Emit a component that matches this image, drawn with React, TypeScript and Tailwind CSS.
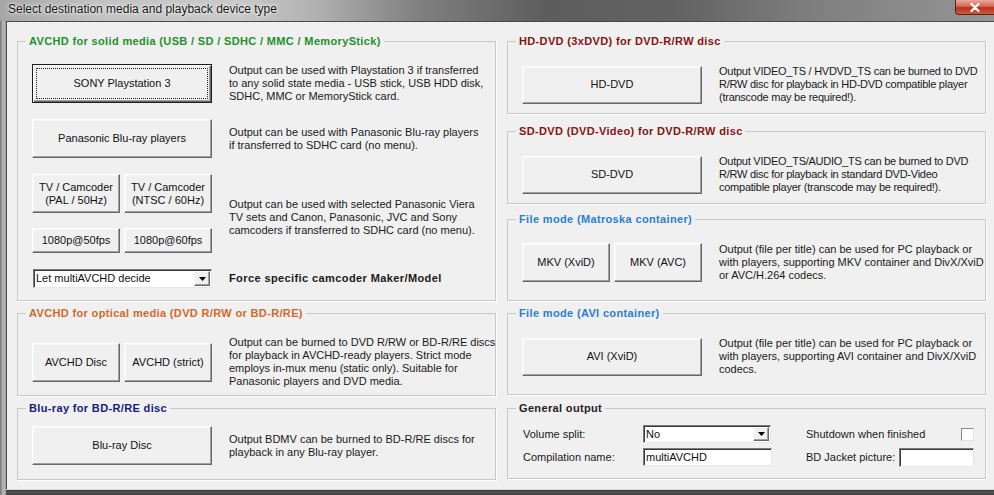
import React from "react";

type GroupProps = {
  title: string;
  color: string;
  className: string;
  children?: React.ReactNode;
};

// Etched group box with its caption sitting on the top border
function Group({ title, color, className, children }: GroupProps) {
  return (
    <fieldset
      className={`min-w-0 border border-[#c5c9cc] shadow-[1px_1px_0_#ffffff] ${className}`}
    >
      <legend className={`ml-[8px] px-[3px] text-[11px] leading-[14px] font-bold tracking-[0.35px] ${color}`}>
        {title}
      </legend>
      {children}
    </fieldset>
  );
}

type BtnProps = { className: string; children: React.ReactNode; isDefault?: boolean };

// Classic raised push button
function Btn({ className, children, isDefault }: BtnProps) {
  if (isDefault) {
    return (
      <button
        className={`flex shrink-0 p-[3px] border border-[#1c1c1c] bg-[#f0f0f0] shadow-[inset_1px_1px_0_#ffffff,inset_-1px_-1px_0_#696969,inset_-2px_-2px_0_#a0a0a0] ${className}`}
      >
        <span className="flex flex-1 items-center justify-center border border-dotted border-[#222] text-[11px] leading-[13px] text-[#111]">
          {children}
        </span>
      </button>
    );
  }
  return (
    <button
      className={`flex shrink-0 items-center justify-center text-center border border-t-white border-l-white border-r-[#696969] border-b-[#696969] bg-[#f0f0f0] shadow-[inset_-1px_-1px_0_#a0a0a0,inset_1px_1px_0_#f7f7f7] text-[11px] leading-[13px] text-[#111] ${className}`}
    >
      {children}
    </button>
  );
}

function Desc({ lines, tight }: { lines: string[]; tight?: boolean }) {
  return (
    <div
      className={`text-[11px] leading-[13px] text-[#1a1a1a] whitespace-nowrap ${tight ? "tracking-[-0.25px]" : ""}`}
    >
      {lines.map((l) => (
        <div key={l}>{l}</div>
      ))}
    </div>
  );
}

// Small down-arrow drop button of a combo box
function DropArrow() {
  return (
    <div className="flex h-full w-[16px] shrink-0 items-center justify-center border border-t-white border-l-white border-r-[#696969] border-b-[#696969] bg-[#f0f0f0] shadow-[inset_-1px_-1px_0_#a0a0a0]">
      <svg width="7" height="4" viewBox="0 0 7 4">
        <path d="M0 0H7L3.5 4Z" fill="#000" />
      </svg>
    </div>
  );
}

function Combo({ value, className }: { value: string; className: string }) {
  return (
    <div
      className={`flex shrink-0 items-stretch bg-white border border-t-[#7a7a7a] border-l-[#7a7a7a] border-r-[#e6e6e6] border-b-[#e6e6e6] shadow-[inset_1px_1px_0_#3a3a3a] ${className}`}
    >
      <span className="flex flex-1 items-center pl-[2px] text-[11px] leading-[13px] text-[#111]">{value}</span>
      <div className="py-[1px] pr-[1px]">
        <DropArrow />
      </div>
    </div>
  );
}

function Field({ value, className }: { value?: string; className: string }) {
  return (
    <div
      className={`flex shrink-0 items-center bg-white border border-t-[#7a7a7a] border-l-[#7a7a7a] border-r-[#e6e6e6] border-b-[#e6e6e6] shadow-[inset_1px_1px_0_#3a3a3a] pl-[2px] text-[11px] leading-[13px] text-[#111] ${className}`}
    >
      {value}
    </div>
  );
}

export default function App() {
  return (
    <div className="w-[994px] h-[495px] overflow-hidden flex flex-col bg-[#6f6f6f] font-['Liberation_Sans',Arial,sans-serif]">
      {/* Title bar */}
      <div className="relative flex h-[21px] shrink-0 items-start bg-[linear-gradient(90deg,#a6a6a6_0%,#c2c2c2_10%,#c9c9c9_24%,#b0b0b0_32%,#808080_42%,#5d5d5d_55%,#626262_68%,#7f7f7f_82%,#959595_100%)]">
        <span className="ml-[8px] mt-[2px] text-[12px] leading-[15px] text-[#141414] [text-shadow:0_0_5px_#ffffff,0_0_2px_#ffffff]">
          Select destination media and playback device type
        </span>
        <div className="ml-auto mr-0 flex h-[15px] w-[39px] items-center justify-center rounded-bl-[4px] border-b border-l border-[#5e2118] bg-[linear-gradient(180deg,#e9a89a_0%,#d46a55_45%,#b9321e_55%,#cf5a42_100%)]">
          <svg width="10" height="9" viewBox="0 0 10 9">
            <path d="M1.5 1L8.5 8M8.5 1L1.5 8" stroke="#ffffff" strokeWidth="2.2" strokeLinecap="round" />
          </svg>
        </div>
      </div>

      <div className="flex flex-1">
        {/* left window frame */}
        <div className="w-[6px] shrink-0 bg-[linear-gradient(90deg,#6e6e6e_0%,#a9a9a9_35%,#b9b9b9_70%,#9a9a9a_100%)]" />

        <div className="flex flex-1 flex-col">
          {/* client area */}
          <div className="flex flex-1 gap-[11px] border-t border-l border-[#4a4a4a] bg-[#f0f0f0] pl-[10px] pt-[12px]">
            {/* left column */}
            <div className="flex w-[479px] flex-col gap-[5px]">
              <Group
                title="AVCHD for solid media (USB / SD / SDHC / MMC / MemoryStick)"
                color="text-[#23912c]"
                className="h-[267px]"
              >
                <div className="flex flex-col pl-[14px]">
                  <div className="mt-[16px] flex items-center gap-[17px]">
                    <Btn isDefault className="h-[39px] w-[180px]">
                      SONY Playstation 3
                    </Btn>
                    <Desc
                      lines={[
                        "Output can be used with Playstation 3 if transferred",
                        "to any solid state media - USB stick, USB HDD disk,",
                        "SDHC, MMC or MemoryStick card.",
                      ]}
                    />
                  </div>
                  <div className="mt-[16px] flex items-center gap-[17px]">
                    <Btn className="h-[39px] w-[180px]">Panasonic Blu-ray players</Btn>
                    <Desc
                      lines={[
                        "Output can be used with Panasonic Blu-ray players",
                        "if transferred to SDHC card (no menu).",
                      ]}
                    />
                  </div>
                  <div className="mt-[16px] flex items-center gap-[17px]">
                    <div className="flex w-[180px] flex-col gap-[15px]">
                      <div className="flex gap-[4px]">
                        <Btn className="h-[39px] w-[88px]">
                          TV / Camcoder
                          <br />
                          (PAL / 50Hz)
                        </Btn>
                        <Btn className="h-[39px] w-[88px]">
                          TV / Camcoder
                          <br />
                          (NTSC / 60Hz)
                        </Btn>
                      </div>
                      <div className="flex gap-[4px]">
                        <Btn className="h-[25px] w-[88px]">1080p@50fps</Btn>
                        <Btn className="h-[25px] w-[88px]">1080p@60fps</Btn>
                      </div>
                    </div>
                    <div className="mt-[7px]">
                      <Desc
                        lines={[
                          "Output can be used with selected Panasonic Viera",
                          "TV sets and Canon, Panasonic, JVC and Sony",
                          "camcoders if transferred to SDHC card (no menu).",
                        ]}
                      />
                    </div>
                  </div>
                  <div className="mt-[16px] flex items-center gap-[17px]">
                    <Combo value="Let multiAVCHD decide" className="ml-[1px] h-[19px] w-[179px]" />
                    <span className="text-[11px] font-bold leading-[13px] tracking-[0.4px] text-[#1a1a1a]">
                      Force specific camcoder Maker/Model
                    </span>
                  </div>
                </div>
              </Group>

              <Group
                title="AVCHD for optical media (DVD R/RW or BD-R/RE)"
                color="text-[#d06a2c]"
                className="h-[90px]"
              >
                <div className="mt-[16px] flex items-center gap-[17px] pl-[14px]">
                  <div className="flex gap-[4px]">
                    <Btn className="h-[39px] w-[88px]">AVCHD Disc</Btn>
                    <Btn className="h-[39px] w-[88px]">AVCHD (strict)</Btn>
                  </div>
                  <Desc
                    lines={[
                      "Output can be burned to DVD R/RW or BD-R/RE discs",
                      "for playback in AVCHD-ready players. Strict mode",
                      "employs in-mux menu (static only). Suitable for",
                      "Panasonic players and DVD media.",
                    ]}
                  />
                </div>
              </Group>

              <Group title="Blu-ray for BD-R/RE disc" color="text-[#14207a]" className="h-[79px]">
                <div className="mt-[11px] flex items-center gap-[17px] pl-[14px]">
                  <Btn className="h-[39px] w-[180px]">Blu-ray Disc</Btn>
                  <Desc
                    lines={[
                      "Output BDMV can be burned to BD-R/RE discs for",
                      "playback in any Blu-ray player.",
                    ]}
                  />
                </div>
              </Group>
            </div>

            {/* right column */}
            <div className="flex w-[479px] flex-col">
              <Group
                title="HD-DVD (3xDVD) for DVD-R/RW disc"
                color="text-[#861414]"
                className="h-[80px]"
              >
                <div className="mt-[17px] flex items-center gap-[17px] pl-[14px]">
                  <Btn className="h-[38px] w-[180px]">HD-DVD</Btn>
                  <Desc
                    tight
                    lines={[
                      "Output VIDEO_TS / HVDVD_TS can be burned to DVD",
                      "R/RW disc for playback in HD-DVD compatible player",
                      "(transcode may be required!).",
                    ]}
                  />
                </div>
              </Group>

              <Group
                title="SD-DVD (DVD-Video) for DVD-R/RW disc"
                color="text-[#861414]"
                className="mt-[10px] h-[80px]"
              >
                <div className="mt-[17px] flex items-center gap-[17px] pl-[14px]">
                  <Btn className="h-[38px] w-[180px]">SD-DVD</Btn>
                  <Desc
                    tight
                    lines={[
                      "Output VIDEO_TS/AUDIO_TS can be burned to DVD",
                      "R/RW disc for playback in standard DVD-Video",
                      "compatible player (transcode may be required!).",
                    ]}
                  />
                </div>
              </Group>

              <Group
                title="File mode (Matroska container)"
                color="text-[#2a7fd2]"
                className="mt-[8px] h-[89px]"
              >
                <div className="mt-[17px] flex items-center gap-[17px] pl-[14px]">
                  <div className="flex gap-[4px]">
                    <Btn className="h-[39px] w-[88px]">MKV (XviD)</Btn>
                    <Btn className="h-[39px] w-[88px]">MKV (AVC)</Btn>
                  </div>
                  <Desc
                    lines={[
                      "Output (file per title) can be used for PC playback or",
                      "with players, supporting MKV container and DivX/XviD",
                      "or AVC/H.264 codecs.",
                    ]}
                  />
                </div>
              </Group>

              <Group
                title="File mode (AVI container)"
                color="text-[#2a7fd2]"
                className="mt-[5px] h-[89px]"
              >
                <div className="mt-[17px] flex items-center gap-[17px] pl-[14px]">
                  <Btn className="h-[38px] w-[180px]">AVI (XviD)</Btn>
                  <Desc
                    lines={[
                      "Output (file per title) can be used for PC playback or",
                      "with players, supporting AVI container and DivX/XviD",
                      "codecs.",
                    ]}
                  />
                </div>
              </Group>

              <Group title="General output" color="text-[#1e1e1e]" className="mt-[6px] h-[78px]">
                <div className="flex flex-col gap-[5px] pl-[15px] pt-[10px] text-[11px] leading-[13px] text-[#1a1a1a]">
                  <div className="flex h-[18px] items-center">
                    <span className="w-[120px] shrink-0">Volume split:</span>
                    <Combo value="No" className="h-[18px] w-[128px]" />
                    <span className="ml-[35px] w-[155px] shrink-0">Shutdown when finished</span>
                    <div className="h-[13px] w-[13px] shrink-0 border border-t-[#8a8a8a] border-l-[#8a8a8a] border-r-[#e3e3e3] border-b-[#e3e3e3] bg-white" />
                  </div>
                  <div className="flex h-[18px] items-center">
                    <span className="w-[120px] shrink-0">Compilation name:</span>
                    <Field value="multiAVCHD" className="h-[18px] w-[129px]" />
                    <span className="ml-[34px] w-[93px] shrink-0">BD Jacket picture:</span>
                    <Field className="h-[19px] w-[75px]" />
                  </div>
                </div>
              </Group>
            </div>
          </div>
          {/* bottom window frame */}
          <div className="h-[6px] shrink-0 border-t border-[#d8d8d8] bg-[linear-gradient(180deg,#3a3a3a_0%,#555555_45%,#3e3e3e_100%)]" />
        </div>
      </div>
    </div>
  );
}
